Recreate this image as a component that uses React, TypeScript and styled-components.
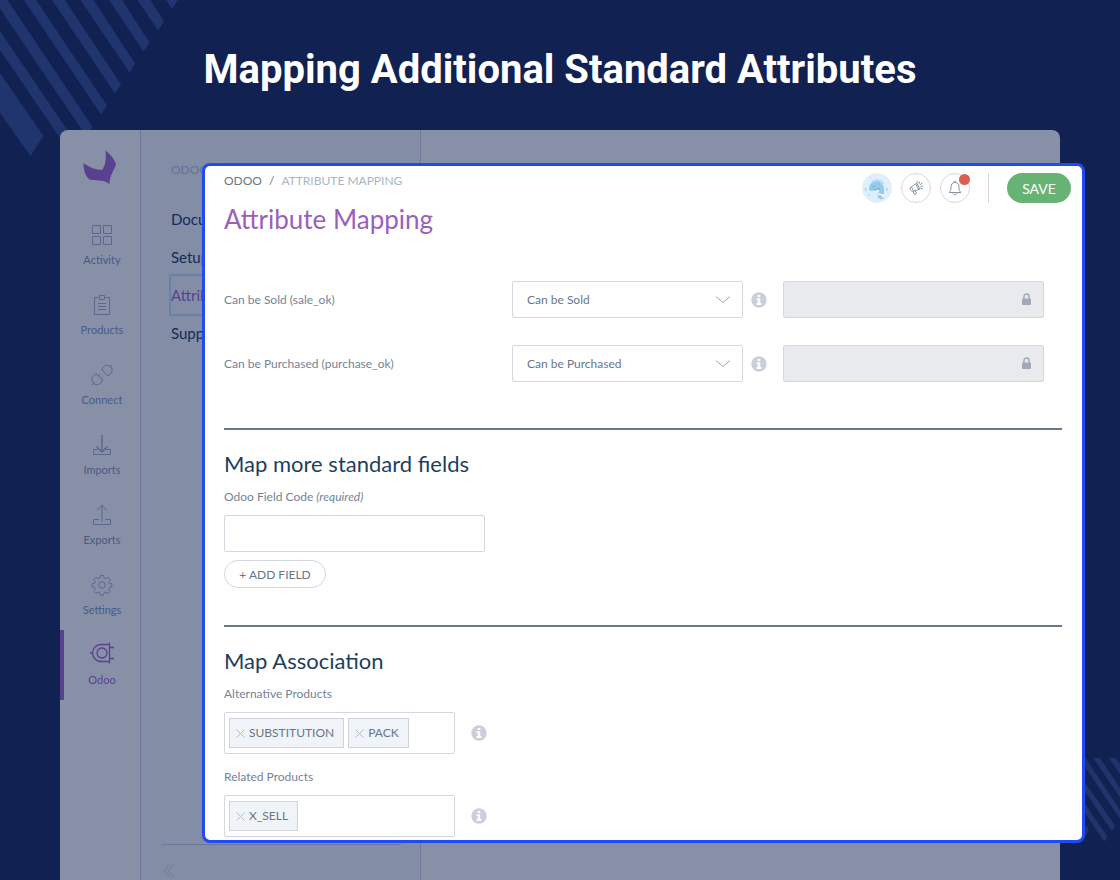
import React from "react";
import styled, { createGlobalStyle, css } from "styled-components";

const color = {
  navy: "#112151",
  stripe: "#20356d",
  nav: "#8890a8",
  panel: "#838da6",
  line: "#6c789a",
  navText: "#465b83",
  navIcon: "#5b688d",
  ink: "#112b58",
  purpleDim: "#5a4190",
  blue: "#2149f5",
  purple: "#9b5fbb",
  heading: "#1d3f5e",
  text: "#67768a",
  label: "#748396",
  faint: "#a9b5c6",
  border: "#d3d7e0",
  green: "#67b373",
};

const GlobalStyle = createGlobalStyle`
  *, *::before, *::after { box-sizing: border-box; }
  body { margin: 0; background: ${color.navy}; font-family: Lato, "Liberation Sans", sans-serif; }
  button, input, select { font: inherit; color: inherit; }
`;

const Page = styled.div`
  position: relative;
  display: flex;
  flex-direction: column;
  min-height: 100vh;
  overflow: hidden;
`;

const Decoration = styled.svg<{ $corner: "top" | "bottom" }>`
  position: absolute;
  pointer-events: none;
  fill: ${color.stripe};
  ${({ $corner }) => ($corner === "top" ? "top: 0; left: 0;" : "bottom: 38px; right: 0;")}
`;

const Banner = styled.header`
  display: flex;
  justify-content: center;
  align-items: center;
  height: 130px;
  padding: 10px 24px 0;
`;

const BannerTitle = styled.h1`
  position: relative;
  margin: 0;
  font: 700 40px/48px Roboto, "Liberation Sans", sans-serif;
  color: #fff;
  text-align: center;
`;

const Shell = styled.div`
  position: relative;
  display: flex;
  flex: 1;
  min-height: 750px;
  margin: 0 60px;
  border-radius: 8px 8px 0 0;
  background: ${color.nav};
`;

const MainNav = styled.nav`
  width: 81px;
  border-right: 1px solid ${color.line};
`;

const Logo = styled.div`
  display: flex;
  justify-content: center;
  height: 80px;
  padding-top: 20px;
`;

const NavItem = styled.a<{ $active?: boolean }>`
  display: flex;
  flex-direction: column;
  align-items: center;
  gap: 6px;
  height: 70px;
  padding-top: 13px;
  border-left: 4px solid ${({ $active }) => ($active ? color.purpleDim : "transparent")};
  color: ${({ $active }) => ($active ? color.purpleDim : color.navText)};
  font-size: 11px;
  line-height: 14px;
  text-decoration: none;
  svg {
    overflow: visible;
    fill: none;
    stroke: ${({ $active }) => ($active ? color.purpleDim : color.navIcon)};
  }
`;

const SidePanel = styled.aside`
  display: flex;
  flex-direction: column;
  width: 280px;
  padding: 30px 19px 0 20px;
  border-right: 1px solid ${color.line};
  background: ${color.panel};
`;

const PanelTitle = styled.div`
  padding-left: 10px;
  margin-bottom: 21px;
  font-size: 12px;
  line-height: 20px;
  color: #65719a;
`;

const PanelLink = styled.a<{ $active?: boolean }>`
  height: 38px;
  margin-left: 8px;
  padding-left: 2px;
  font-size: 15px;
  line-height: 36px;
  color: ${({ $active }) => ($active ? color.purpleDim : color.ink)};
  text-decoration: none;
  ${({ $active }) =>
    $active &&
    css`
      height: 42px;
      margin: -3px 0 -1px 8px;
      padding-left: 0;
      border: 2px solid #6882a8;
      line-height: 38px;
    `}
`;

const PanelFooter = styled.div`
  height: 36px;
  margin-top: auto;
  padding: 19px 0 0 2px;
  border-top: 1px solid ${color.line};
`;

const CollapseButton = styled.button`
  display: block;
  padding: 0;
  border: 0;
  background: none;
  svg { display: block; fill: none; stroke: ${color.line}; }
`;

const Dialog = styled.main`
  position: absolute;
  top: 33px;
  left: 142px;
  right: -25px;
  padding-bottom: 3px;
  border: 3px solid ${color.blue};
  border-radius: 8px;
  background: #fff;
  color: ${color.text};
  font-size: 12px;
`;

const DialogHeader = styled.header`
  display: flex;
  justify-content: space-between;
  align-items: flex-start;
  padding: 5px 11px 0 19px;
`;

const Breadcrumb = styled.nav`
  display: flex;
  gap: 7px;
  line-height: 20px;
  color: ${color.faint};
  a { color: ${color.text}; text-decoration: none; }
  i { font-style: normal; color: ${color.text}; }
`;

const DialogTitle = styled.h2`
  margin: 10px 0 0;
  font-size: 26px;
  line-height: 36px;
  font-weight: 400;
  color: ${color.purple};
`;

const Actions = styled.div`
  display: flex;
  align-items: center;
  gap: 9px;
  padding-top: 2px;
`;

const RoundButton = styled.button<{ $avatar?: boolean }>`
  position: relative;
  display: grid;
  place-items: center;
  width: 30px;
  height: 30px;
  padding: 0;
  border: 1px solid ${({ $avatar }) => ($avatar ? "#def0fd" : "#d8d8e0")};
  border-radius: 50%;
  background: ${({ $avatar }) => ($avatar ? "#def0fd" : "#fff")};
`;

const AlertDot = styled.span`
  position: absolute;
  top: 0;
  right: -1px;
  width: 11px;
  height: 11px;
  border-radius: 50%;
  background: #d4604f;
`;

const Separator = styled.span`
  width: 1px;
  height: 30px;
  margin: 0 9px;
  background: #d5d8e0;
`;

const SaveButton = styled.button`
  width: 64px;
  height: 30px;
  padding: 0;
  border: 0;
  border-radius: 15px;
  background: ${color.green};
  color: #fff;
  font-size: 14px;
`;

const DialogBody = styled.form`
  padding: 0 20px 0 19px;
`;

const MappingRows = styled.div`
  display: grid;
  gap: 27px;
  padding: 44px 0 46px;
`;

const MappingRow = styled.div`
  display: grid;
  grid-template-columns: 288px 239px 32px 261px;
  align-items: center;
  height: 37px;
`;

const Label = styled.label`
  font-size: 12px;
  line-height: 20px;
  color: ${color.label};
`;

const SelectBox = styled.div`
  position: relative;
  width: 231px;
  svg {
    position: absolute;
    right: 12px;
    top: 14px;
    fill: none;
    stroke: #a1a9b7;
    pointer-events: none;
  }
`;

const Select = styled.select`
  display: block;
  width: 100%;
  height: 37px;
  padding: 0 36px 0 14px;
  border: 1px solid ${color.border};
  border-radius: 2px;
  background: #fff;
  appearance: none;
`;

const LockedBox = styled.div`
  position: relative;
  svg {
    position: absolute;
    right: 13px;
    top: 12px;
    pointer-events: none;
  }
`;

const TextInput = styled.input`
  display: block;
  width: 261px;
  height: 37px;
  padding: 0 14px;
  border: 1px solid ${color.border};
  border-radius: 2px;
  background: #fff;
  &:disabled { background: #e9eaee; }
`;

const Section = styled.section`
  border-top: 2px solid #6b7790;
`;

const SectionTitle = styled.h3`
  margin: 0;
  padding: 19px 0 8px;
  font-size: 22px;
  line-height: 30px;
  font-weight: 400;
  color: ${color.heading};
`;

const Field = styled.div`
  display: flex;
  flex-direction: column;
  align-items: flex-start;
  gap: 8px;
  margin-bottom: 13px;
  ${Section}:last-child > &:last-child { margin-bottom: 0; }
`;

const AddButton = styled.button`
  width: 102px;
  height: 28px;
  margin-bottom: 24px;
  padding: 0;
  border: 1px solid ${color.border};
  border-radius: 14px;
  background: #fff;
`;

const TagRow = styled.div`
  display: flex;
  align-items: center;
  gap: 16px;
`;

const TagBox = styled.div`
  display: flex;
  gap: 4px;
  width: 231px;
  height: 42px;
  padding: 5px 4px;
  border: 1px solid ${color.border};
  border-radius: 2px;
`;

const Tag = styled.span`
  display: flex;
  align-items: center;
  gap: 4px;
  height: 30px;
  padding: 0 9px 0 6px;
  border: 1px solid #cfd2d8;
  background: #f0f3f8;
  line-height: 20px;
`;

const RemoveButton = styled.button`
  display: block;
  padding: 0;
  border: 0;
  background: none;
  svg { display: block; stroke: #b3bac8; }
`;

const TagInput = styled.input`
  flex: 1;
  min-width: 0;
  padding: 0;
  border: 0;
  outline: 0;
  background: none;
`;

const InfoIcon = () => (
  <svg width="16" height="16" viewBox="0 0 16 16" aria-label="Information">
    <circle cx="8" cy="8" r="7.7" fill="#cbcfd9" />
    <path d="M6.7 3h2.6v2H6.7zM5.6 6.3h3.6v4.8h1.2V13H5.6v-1.9h1.2V8.1H5.6z" fill="#fff" />
  </svg>
);

const NAV = [
  {
    label: "Activity",
    icon: <path d="M2.5 1.5h8v8h-8zM13.5 1.5h8v8h-8zM2.5 12.5h8v8h-8zM13.5 12.5h8v8h-8z" />,
  },
  {
    label: "Products",
    icon: <path d="M8.500 3.500h-4v17h15v-17h-4M9.500 1.500h5v4h-5zM8 9.500h8M8 12.500h8M8 15.500h8" />,
  },
  {
    label: "Connect",
    icon: (
      <g>
        <path d="M11.500 5.500l6.500 6.500M12.200 6.200a5 5 0 1 1 5.100 5.100M19.500 3.500l2.500-2.500" />
        <path d="M6 9.500l7 7M6.600 10.300a5.200 5.200 0 1 0 5.600 5.600M4.500 18.500L2 21M8.500 12l1.800-1.800M11 14.500l1.800-1.800" />
      </g>
    ),
  },
  {
    label: "Imports",
    icon: <g><path d="M8 15.500H3.500v5h17v-5H16" /><path d="M12 1v17M6.500 12.500L12 18l5.500-5.500" strokeWidth="1.500" /></g>,
  },
  {
    label: "Exports",
    icon: <path d="M9 15.500H3.500v5h17v-5H15M12 18V1M7 6.500L12 1l5 5.500" />,
  },
  {
    label: "Settings",
    icon: (
      <g>
        <circle cx="12" cy="11" r="3.300" />
        <path d="M10.300 1.500h3.400l.4 2.600 1.700.7 2.300-1.600 2.200 2.300-1.600 2.200.7 1.700 2.400.4v3.200l-2.400.4-.7 1.700 1.600 2.200-2.200 2.300-2.300-1.600-1.700.7-.4 2.400h-3.400l-.4-2.400-1.700-.7-2.300 1.600-2.200-2.300 1.600-2.200-.7-1.700-2.400-.4V9.800l2.400-.4.7-1.700-1.600-2.200 2.200-2.300 2.300 1.600 1.700-.7z" />
      </g>
    ),
  },
  {
    label: "Odoo",
    active: true,
    icon: (
      <g strokeWidth="1.300">
        <path d="M19.500 -1.500v21M19.500 .5H11a8.500 8.500 0 0 0 0 17h8.500M0 9h2.500M19.500 3.500H24M19.500 14.500H24" />
        <circle cx="12" cy="9" r="5" />
      </g>
    ),
  },
];

const Stripes = () => (
  <>
    <Decoration $corner="top" width="180" height="160" aria-hidden="true">
      <path d="M0 73L43.500 136 30.500 156 0 113zM0 31L72 137 66 147 0 50zM-6 0H7.500L92.500 127 86 136zM24 0H36L107 105.500 101 114.500zM52 0H65L121 84.500 115 93.500zM80.500 0H93.500L135 63.500 129.500 72.500zM109 0H122L149.500 42.500 143.500 51.500zM137.500 0H150.500L164 21.500 158 30.500zM166 0H178L172 9z" />
    </Decoration>
    <Decoration $corner="bottom" width="60" height="84" viewBox="1060 758 60 84" aria-hidden="true">
      <path d="M1060 788l29 42-3.500 6L1060 799zM1060 767l47.700 70-3.500 4.500L1060 777zM1068 758l47.300 68-3.500 5L1062 758zM1079 758h6.500l34.500 52v9zM1093.300 758h6.700l20 30v9.500zM1109 758h6.700l4.300 6.500v9.500z" />
    </Decoration>
  </>
);

type MappingProps = { id: string; label: string; value: string };

const Mapping = ({ id, label, value }: MappingProps) => (
  <MappingRow>
    <Label htmlFor={id}>{label}</Label>
    <SelectBox>
      <Select id={id} defaultValue={value}>
        <option>{value}</option>
      </Select>
      <svg width="16" height="10"><path d="M1 1.500l7 6 7-6" /></svg>
    </SelectBox>
    <InfoIcon />
    <LockedBox>
      <TextInput disabled aria-label={`${value} value`} />
      <svg width="9" height="12" viewBox="0 0 9 12">
        <path d="M2 6V3.500a2.500 2.500 0 0 1 5 0V6" fill="none" stroke="#a1a9b9" strokeWidth="1.500" />
        <rect y="5.500" width="9" height="6.500" rx="1" fill="#a1a9b9" />
      </svg>
    </LockedBox>
  </MappingRow>
);

type TagFieldProps = { id: string; label: string; tags: string[] };

const TagField = ({ id, label, tags }: TagFieldProps) => (
  <Field>
    <Label htmlFor={id}>{label}</Label>
    <TagRow>
      <TagBox>
        {tags.map((tag) => (
          <Tag key={tag}>
            <RemoveButton type="button" aria-label={`Remove ${tag}`}>
              <svg width="9" height="9"><path d="M.5.5l8 8M8.500.5l-8 8" /></svg>
            </RemoveButton>
            {tag}
          </Tag>
        ))}
        <TagInput id={id} />
      </TagBox>
      <InfoIcon />
    </TagRow>
  </Field>
);

export default function App() {
  return (
    <Page>
      <GlobalStyle />
      <Stripes />
      <Banner>
        <BannerTitle>Mapping Additional Standard Attributes</BannerTitle>
      </Banner>
      <Shell>
        <MainNav>
          <Logo>
            <svg width="34" height="36" viewBox="0 0 34 36" fill={color.purpleDim}>
              <path d="M.5 13c6 4.500 12 7 18.500 7 4-5 4-11 3.500-19.500 5 4 9 8.500 10.500 14-2 6-6 10-6.500 19.500-7-5.500-14-2.500-20-4.500C2 26 .5 20 .5 13z" />
            </svg>
          </Logo>
          {NAV.map(({ label, icon, active }) => (
            <NavItem key={label} href="#" $active={active}>
              <svg width="24" height="24" viewBox="0 -1 24 24">{icon}</svg>
              {label}
            </NavItem>
          ))}
        </MainNav>
        <SidePanel>
          <PanelTitle>ODOO</PanelTitle>
          <PanelLink href="#">Docu</PanelLink>
          <PanelLink href="#">Setup</PanelLink>
          <PanelLink href="#" $active>Attrib</PanelLink>
          <PanelLink href="#">Supp</PanelLink>
          <PanelFooter>
            <CollapseButton aria-label="Collapse panel">
              <svg width="12" height="13"><path d="M6.500.5L1 6.500l5.500 6M10.500.5L5 6.500l5.500 6" /></svg>
            </CollapseButton>
          </PanelFooter>
        </SidePanel>

        <Dialog>
          <DialogHeader>
            <div>
              <Breadcrumb>
                <a href="#">ODOO</a>
                <i>/</i>
                <span>ATTRIBUTE MAPPING</span>
              </Breadcrumb>
              <DialogTitle>Attribute Mapping</DialogTitle>
            </div>
            <Actions>
              <RoundButton $avatar aria-label="Profile">
                <svg width="28" height="28" viewBox="0 0 28 28">
                  <path d="M6 15c0-5 3-7.500 8-7.500 4 0 7 3 7 8v3c0 2.500-.5 4-1.500 6H15l-.5-4 2-4c-1-1.500-3-1.500-4.500-.5-2 1.500-5.500 1.500-6-1z" fill="#93cbed" />
                  <path d="M9 8.500l2-2 1 1 2-2 1 2 3-1 1 2 2 1" fill="none" stroke="#9fc6de" />
                  <path d="M9.500 13.500l2-1.500M11 15.500l2 .5 2-1.500 2 1" fill="none" stroke="#6f9dbb" />
                  <path d="M15 20l5 1v2.500" fill="none" stroke="#fff" strokeWidth="1.500" />
                  <path d="M7 3l1 1M24 14v3M2 14l1 3M5 20l2 2M17 25l4-1" fill="none" stroke="#a2c7de" />
                </svg>
              </RoundButton>
              <RoundButton aria-label="Announcements">
                <svg width="16" height="16" viewBox="0 0 16 16" fill="none" stroke="#8995a4">
                  <path d="M2 8l6.500-5 3.500 6-7.500 2.500c-1 .2-3-2.500-2.500-3.500zM3.500 7l2 4M5 11.500l1.500 3 2-1-1.500-3M7.700 4l3 5.500M11 4l.5-2.500M12 5l2.500-2.500M12.500 6.500l2.500-.5M12.500 8l2.500 1M9.500 2.700l-.5-1.700" />
                </svg>
              </RoundButton>
              <RoundButton aria-label="Notifications">
                <svg width="14" height="16" viewBox="0 0 14 16" fill="none" stroke="#8995a4">
                  <path d="M1 12.500c1.500-1 2-2 2-5.500 0-3 1.500-4.500 4-4.500S11 4 11 7c0 3.500.5 4.500 2 5.500zM6 2.500c0-2 2-2 2 0M5 12.500c0 3 4 3 4 0" />
                </svg>
                <AlertDot />
              </RoundButton>
              <Separator />
              <SaveButton type="submit" form="mapping">SAVE</SaveButton>
            </Actions>
          </DialogHeader>

          <DialogBody id="mapping" onSubmit={(e) => e.preventDefault()}>
            <MappingRows>
              <Mapping id="sold" label="Can be Sold (sale_ok)" value="Can be Sold" />
              <Mapping id="purchased" label="Can be Purchased (purchase_ok)" value="Can be Purchased" />
            </MappingRows>
            <Section>
              <SectionTitle>Map more standard fields</SectionTitle>
              <Field>
                <Label htmlFor="code">Odoo Field Code <em>(required)</em></Label>
                <TextInput id="code" />
                <AddButton type="button">+ ADD FIELD</AddButton>
              </Field>
            </Section>
            <Section>
              <SectionTitle>Map Association</SectionTitle>
              <TagField id="alternative" label="Alternative Products" tags={["SUBSTITUTION", "PACK"]} />
              <TagField id="related" label="Related Products" tags={["X_SELL"]} />
            </Section>
          </DialogBody>
        </Dialog>
      </Shell>
    </Page>
  );
}
